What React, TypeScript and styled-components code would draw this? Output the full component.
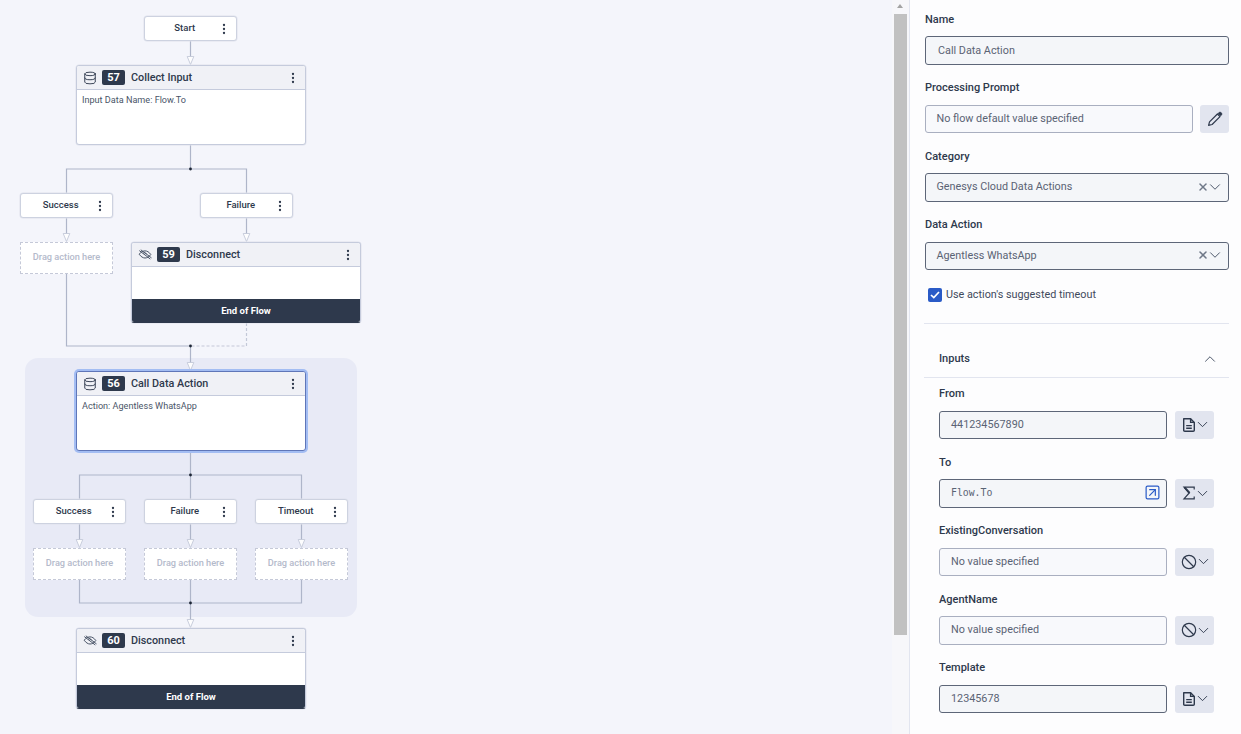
import React from "react";
import styled, { createGlobalStyle } from "styled-components";
import { Ban, ChevronDown, ChevronUp, Database, SquareArrowUpRight, X } from "lucide-react";

const GlobalStyle = createGlobalStyle`
  html, body {
    margin: 0;
    padding: 0;
    height: 100%;
    overflow: hidden;
  }
  body {
    font-family: Roboto, "Liberation Sans", sans-serif;
    color: #2e394c;
  }
`;

const Kebab = () => (
  <svg width="4" height="12" viewBox="0 0 4 12">
    <circle cx="2" cy="2" r="1.15" fill="#2e394c" />
    <circle cx="2" cy="6" r="1.15" fill="#2e394c" />
    <circle cx="2" cy="10" r="1.15" fill="#2e394c" />
  </svg>
);

const EyeSlash = () => (
  <svg width="14" height="11" viewBox="0 0 14 11" fill="none" stroke="#4a5568" strokeWidth="1">
    <path d="M1.2 5.2C3 2.8 5 1.9 7 1.9S11 2.9 12.8 5.5C11 8 9 9 7 9S3 7.8 1.2 5.2Z" />
    <path d="M1.3 1.6L12.3 10M2.8 .8L13.5 8.9" />
    <path d="M5 4.2Q6.8 3.1 8.6 4.6" strokeWidth="0.8" />
  </svg>
);

const FileIcon = () => (
  <svg width="14" height="16" viewBox="0 0 14 16" fill="none" stroke="#2e394c" strokeWidth="1.4">
    <path d="M1.7 1.7H8.6L12.3 5.4V13.2Q12.3 14.3 11.2 14.3H2.8Q1.7 14.3 1.7 13.2Z" strokeLinejoin="round" />
    <path d="M8.6 1.7V5.4H12.3M4.2 8.6H9.8M4.2 11.2H9.8" />
  </svg>
);

const SigmaIcon = () => (
  <svg width="14" height="14" viewBox="0 0 14 14" fill="none" stroke="#2e394c" strokeWidth="1.2">
    <path d="M12.2 3.6V1.2H2L7.2 7L2 12.8H12.2V10.4" />
    <path d="M2.6 1.4L7.6 7" strokeWidth="1.9" />
  </svg>
);

const PencilIcon = () => (
  <svg width="16" height="16" viewBox="0 0 16 16" fill="none" stroke="#2e394c" strokeWidth="1.2">
    <path d="M1.6 14.4L2.5 10.9L10.4 3L13 5.6L5.1 13.5Z" strokeLinejoin="round" />
    <path
      d="M10.9 2.5L12.1 1.3Q13 .5 13.9 1.3L14.7 2.1Q15.5 3 14.7 3.9L13.5 5.1Z"
      fill="#2e394c"
      strokeWidth="0.4"
    />
  </svg>
);

type Wire = { d: string; dashed?: boolean };

const wires: Wire[] = [
  { d: "M190.5 41V57" },
  { d: "M190.5 145V169" },
  { d: "M66.5 193V169H246.5V193" },
  { d: "M66.5 218V234" },
  { d: "M246.5 218V234" },
  { d: "M66.5 273V346H190.5V363" },
  { d: "M246.5 323V346H190.5", dashed: true },
  { d: "M190.5 451V475" },
  { d: "M79.5 499V475H301.5V499" },
  { d: "M79.5 524V540" },
  { d: "M190.5 475V499" },
  { d: "M190.5 524V540" },
  { d: "M301.5 524V540" },
  { d: "M79.5 579V603H301.5V579" },
  { d: "M190.5 579V620" },
];

const arrows: [number, number][] = [
  [190.5, 56.5],
  [66.5, 233.5],
  [246.5, 233.5],
  [190.5, 362.5],
  [79.5, 539.5],
  [190.5, 539.5],
  [301.5, 539.5],
  [190.5, 619.5],
];

const dots: [number, number][] = [
  [190.5, 169],
  [190.5, 346],
  [190.5, 475],
  [190.5, 603],
];

const labelNodes = [
  { name: "Start", x: 144, y: 16 },
  { name: "Success", x: 20, y: 193 },
  { name: "Failure", x: 200, y: 193 },
  { name: "Success", x: 33, y: 499 },
  { name: "Failure", x: 144, y: 499 },
  { name: "Timeout", x: 255, y: 499 },
];

const dropZones = [
  { x: 20, y: 242 },
  { x: 33, y: 548 },
  { x: 144, y: 548 },
  { x: 255, y: 548 },
];

type ActionNode = {
  id: number;
  title: string;
  x: number;
  y: number;
  icon: "data" | "end";
  body?: string;
  selected?: boolean;
};

const actions: ActionNode[] = [
  { id: 57, title: "Collect Input", x: 76, y: 65, icon: "data", body: "Input Data Name: Flow.To" },
  { id: 59, title: "Disconnect", x: 131, y: 242, icon: "end" },
  { id: 56, title: "Call Data Action", x: 76, y: 371, icon: "data", body: "Action: Agentless WhatsApp", selected: true },
  { id: 60, title: "Disconnect", x: 76, y: 628, icon: "end" },
];

type InputRow = { label: string; value: string; kind: "file" | "sigma" | "ban"; empty?: boolean; mono?: boolean };

const inputRows: InputRow[] = [
  { label: "From", value: "441234567890", kind: "file" },
  { label: "To", value: "Flow.To", kind: "sigma", mono: true },
  { label: "ExistingConversation", value: "No value specified", kind: "ban", empty: true },
  { label: "AgentName", value: "No value specified", kind: "ban", empty: true },
  { label: "Template", value: "12345678", kind: "file" },
];

const typeIcon = (kind: InputRow["kind"]) => {
  if (kind === "file") return <FileIcon />;
  if (kind === "sigma") return <SigmaIcon />;
  return <Ban size={16} strokeWidth={1.8} color="#2e394c" />;
};

export default function App() {
  return (
    <Page>
      <GlobalStyle />
      <Canvas>
        <GroupArea />
        <Wires width="890" height="734">
          {wires.map((w) => (
            <path
              key={w.d}
              d={w.d}
              fill="none"
              stroke={w.dashed ? "#c3c8d8" : "#aeb5c9"}
              strokeWidth="1.2"
              strokeDasharray={w.dashed ? "3 2" : undefined}
            />
          ))}
          {arrows.map(([x, y]) => (
            <path
              key={`${x}-${y}`}
              d={`M${x - 3.3} ${y}H${x + 3.3}L${x} ${y + 8}Z`}
              fill="#fdfdfe"
              stroke="#c3c8d8"
              strokeWidth="0.9"
            />
          ))}
          {dots.map(([x, y]) => (
            <circle key={y} cx={x} cy={y} r="1.4" fill="#1c2534" />
          ))}
        </Wires>

        {labelNodes.map((n) => (
          <LabelNode key={`${n.name}-${n.x}`} $x={n.x} $y={n.y}>
            <LabelText>{n.name}</LabelText>
            <Kebab />
          </LabelNode>
        ))}

        {dropZones.map((z) => (
          <DropZone key={`${z.x}-${z.y}`} $x={z.x} $y={z.y}>
            Drag action here
          </DropZone>
        ))}

        {actions.map((a) => (
          <Action key={a.id} $x={a.x} $y={a.y} $selected={a.selected} $ended={a.body === undefined}>
            <ActionHeader>
              <HeaderIcon>
                {a.icon === "data" ? <Database size={14} strokeWidth={1.6} color="#2e394c" /> : <EyeSlash />}
              </HeaderIcon>
              <IdBadge>{a.id}</IdBadge>
              <ActionTitle>{a.title}</ActionTitle>
              <Kebab />
            </ActionHeader>
            {a.body !== undefined ? (
              <ActionBody>{a.body}</ActionBody>
            ) : (
              <>
                <EmptyBody />
                <EndBar>End of Flow</EndBar>
              </>
            )}
          </Action>
        ))}
      </Canvas>

      <Scrollbar>
        <ScrollArrow />
        <ScrollThumb />
      </Scrollbar>

      <Panel>
        <Field>
          <FieldLabel>Name</FieldLabel>
          <NameBox $strong $pad={12}>Call Data Action</NameBox>
        </Field>
        <Field>
          <FieldLabel>Processing Prompt</FieldLabel>
          <FieldRow $gap={7}>
            <TextBox>No flow default value specified</TextBox>
            <IconButton $width={29}>
              <PencilIcon />
            </IconButton>
          </FieldRow>
        </Field>
        <Field>
          <FieldLabel>Category</FieldLabel>
          <TextBox $strong>
            <BoxValue>Genesys Cloud Data Actions</BoxValue>
            <ClearIcon size={12} strokeWidth={3} color="#6f7888" />
            <ChevronDown size={18} strokeWidth={1.3} color="#4a5568" />
          </TextBox>
        </Field>
        <Field>
          <FieldLabel>Data Action</FieldLabel>
          <TextBox $strong>
            <BoxValue>Agentless WhatsApp</BoxValue>
            <ClearIcon size={12} strokeWidth={3} color="#6f7888" />
            <ChevronDown size={18} strokeWidth={1.3} color="#4a5568" />
          </TextBox>
        </Field>
        <CheckRow>
          <CheckBox>
            <svg width="10" height="8" viewBox="0 0 10 8" fill="none" stroke="#fff" strokeWidth="1.7">
              <path d="M1 4L3.8 6.6L9 1" />
            </svg>
          </CheckBox>
          Use action's suggested timeout
        </CheckRow>
        <Divider />
        <SectionHeader>
          Inputs
          <ChevronUp size={18} strokeWidth={1.3} color="#4a5568" />
        </SectionHeader>
        <InputsList>
          {inputRows.map((r) => (
            <Field key={r.label}>
              <FieldLabel>{r.label}</FieldLabel>
              <FieldRow $gap={8}>
                <TextBox $strong={!r.empty} $pad={11} $mono={r.mono}>
                  <BoxValue>{r.value}</BoxValue>
                  {r.mono && <LinkIcon size={17} strokeWidth={1.7} color="#2a5bc7" />}
                </TextBox>
                <TypeButton $width={39}>
                  {typeIcon(r.kind)}
                  <TypeChevron size={17} strokeWidth={1.3} color="#2e394c" />
                </TypeButton>
              </FieldRow>
            </Field>
          ))}
        </InputsList>
      </Panel>
    </Page>
  );
}

const Page = styled.div`
  display: flex;
  width: 1241px;
  height: 734px;
  overflow: hidden;
  background: #f4f5fb;
`;

const Canvas = styled.div`
  position: relative;
  flex: 0 0 892px;
  height: 734px;
`;

const GroupArea = styled.div`
  position: absolute;
  left: 25px;
  top: 358px;
  width: 332px;
  height: 259px;
  border-radius: 13px;
  background: #e8eaf6;
`;

const Wires = styled.svg`
  position: absolute;
  left: 0;
  top: 0;
`;

const LabelNode = styled.div<{ $x: number; $y: number }>`
  position: absolute;
  left: ${(p) => p.$x}px;
  top: ${(p) => p.$y}px;
  box-sizing: border-box;
  display: flex;
  align-items: center;
  width: 93px;
  height: 25px;
  padding: 0 10.5px 0 0;
  background: #fff;
  border: 1px solid #cdd2e0;
  border-radius: 3px;
  box-shadow: 0 0 0 0.5px #dfe2ec;
`;

const LabelText = styled.span`
  flex: 1;
  padding-left: 3px;
  margin-top: -2px;
  text-align: center;
  font-size: 9.5px;
  font-weight: 500;
  color: #2e394c;
`;

const DropZone = styled.div<{ $x: number; $y: number }>`
  position: absolute;
  left: ${(p) => p.$x}px;
  top: ${(p) => p.$y}px;
  box-sizing: border-box;
  display: flex;
  align-items: center;
  justify-content: center;
  width: 93px;
  height: 32px;
  padding-bottom: 3px;
  background: #fff;
  border: 1px dashed #c5c9d8;
  font-size: 9.2px;
  font-weight: 500;
  color: #b4bacb;
`;

const Action = styled.div<{ $x: number; $y: number; $selected?: boolean; $ended?: boolean }>`
  position: absolute;
  left: ${(p) => p.$x}px;
  top: ${(p) => p.$y}px;
  box-sizing: border-box;
  display: flex;
  flex-direction: column;
  width: 230px;
  height: ${(p) => (p.$ended ? 81 : 80)}px;
  overflow: hidden;
  background: #fff;
  border: 1px solid ${(p) => (p.$selected ? "#5f76b8" : "#c5cbdc")};
  border-bottom-color: ${(p) => (p.$ended ? "#2e394c" : p.$selected ? "#5f76b8" : "#c5cbdc")};
  border-radius: 3px;
  box-shadow: ${(p) => (p.$selected ? "0 0 0 2px #a3bdf3" : "0 0 0 0.5px #dfe2ec")};
`;

const ActionHeader = styled.div`
  display: flex;
  align-items: center;
  flex: 0 0 24px;
  box-sizing: border-box;
  padding: 0 10.5px 0 0;
  background: #f0f1f6;
  border-bottom: 1px solid #c5cbdc;
`;

const HeaderIcon = styled.span`
  display: flex;
  justify-content: center;
  width: 25px;
  padding-left: 1px;
  box-sizing: border-box;
`;

const IdBadge = styled.span`
  display: flex;
  align-items: center;
  justify-content: center;
  width: 23px;
  height: 15.5px;
  border-radius: 2px;
  background: #2e394c;
  color: #fff;
  font-size: 11px;
  font-weight: 700;
`;

const ActionTitle = styled.span`
  flex: 1;
  margin-left: 6px;
  font-size: 10.8px;
  font-weight: 500;
  color: #2e394c;
`;

const ActionBody = styled.div`
  padding: 4px 5px;
  font-size: 9.1px;
  line-height: 12px;
  color: #4a5568;
`;

const EmptyBody = styled.div`
  flex: 1;
`;

const EndBar = styled.div`
  display: flex;
  align-items: center;
  justify-content: center;
  flex: 0 0 23px;
  background: #2e394c;
  color: #fff;
  font-size: 9.5px;
  font-weight: 700;
`;

const Scrollbar = styled.div`
  display: flex;
  flex-direction: column;
  flex: 0 0 18px;
  box-sizing: border-box;
  height: 734px;
  padding: 0 0 0 2px;
  background: #f7f7fa;
  border-right: 1px solid #e2e5ef;
`;

const ScrollArrow = styled.div`
  flex: 0 0 14px;
  width: 13px;
  position: relative;
  &::after {
    content: "";
    position: absolute;
    left: 3px;
    top: 4px;
    border-left: 3.5px solid transparent;
    border-right: 3.5px solid transparent;
    border-bottom: 4px solid #a3a3a3;
  }
`;

const ScrollThumb = styled.div`
  width: 13px;
  height: 621px;
  background: #c1c1c1;
`;

const Panel = styled.div`
  flex: 1;
  box-sizing: border-box;
  height: 734px;
  padding: 12.6px 12px 0 15px;
  background: #fdfdfe;
`;

const Field = styled.div`
  display: flex;
  flex-direction: column;
  gap: 9.5px;
  margin-bottom: 16.5px;
`;

const FieldLabel = styled.div`
  height: 14px;
  font-size: 11px;
  line-height: 14px;
  font-weight: 500;
  color: #2e394c;
`;

const FieldRow = styled.div<{ $gap: number }>`
  display: flex;
  gap: ${(p) => p.$gap}px;
`;

const TextBox = styled.div<{ $strong?: boolean; $pad?: number; $mono?: boolean }>`
  flex-grow: 1;
  min-width: 0;
  box-sizing: border-box;
  display: flex;
  align-items: center;
  height: 28.5px;
  padding: 0 4px 1px ${(p) => p.$pad ?? 10.5}px;
  background: ${(p) => (p.$strong ? "#f4f6f9" : "#f8f9fc")};
  border: 1px solid ${(p) => (p.$strong ? "#5d6678" : "#a9afc0")};
  border-radius: 3px;
  font-family: ${(p) => (p.$mono ? '"DejaVu Sans Mono", "Liberation Mono", monospace' : "inherit")};
  font-size: ${(p) => (p.$mono ? "9.8px" : "10.8px")};
  color: #5a6374;
`;

const NameBox = styled(TextBox)`
  padding-top: 1px;
  padding-bottom: 0;
`;

const BoxValue = styled.span`
  flex: 1;
`;

const ClearIcon = styled(X)`
  margin-right: -2.5px;
`;

const LinkIcon = styled(SquareArrowUpRight)`
  margin-right: 1px;
`;

const IconButton = styled.div<{ $width: number }>`
  flex: 0 0 ${(p) => p.$width}px;
  box-sizing: border-box;
  display: flex;
  align-items: center;
  justify-content: center;
  height: 28.5px;
  border-radius: 3px;
  background: #e2e5ef;
`;

const TypeButton = styled(IconButton)`
  padding-left: 4px;
`;

const TypeChevron = styled(ChevronDown)`
  margin-left: -2px;
`;

const CheckRow = styled.div`
  display: flex;
  align-items: center;
  gap: 4px;
  margin: 17.5px 0 0 3px;
  height: 14px;
  font-size: 10.8px;
  color: #3f4a5c;
`;

const CheckBox = styled.span`
  display: flex;
  align-items: center;
  justify-content: center;
  width: 14px;
  height: 14px;
  border-radius: 2px;
  background: #2a5bc7;
`;

const Divider = styled.div`
  height: 1px;
  margin: 21.5px 0 0 -1px;
  background: #e2e5ef;
`;

const SectionHeader = styled.div`
  box-sizing: border-box;
  display: flex;
  align-items: center;
  justify-content: space-between;
  height: 54px;
  margin-left: -1px;
  padding: 16px 10px 0 15px;
  border-bottom: 1px solid #e2e5ef;
  font-size: 11px;
  font-weight: 500;
  color: #2e394c;
`;

const InputsList = styled.div`
  margin-top: 9px;
  padding: 0 15px 0 14px;
`;
